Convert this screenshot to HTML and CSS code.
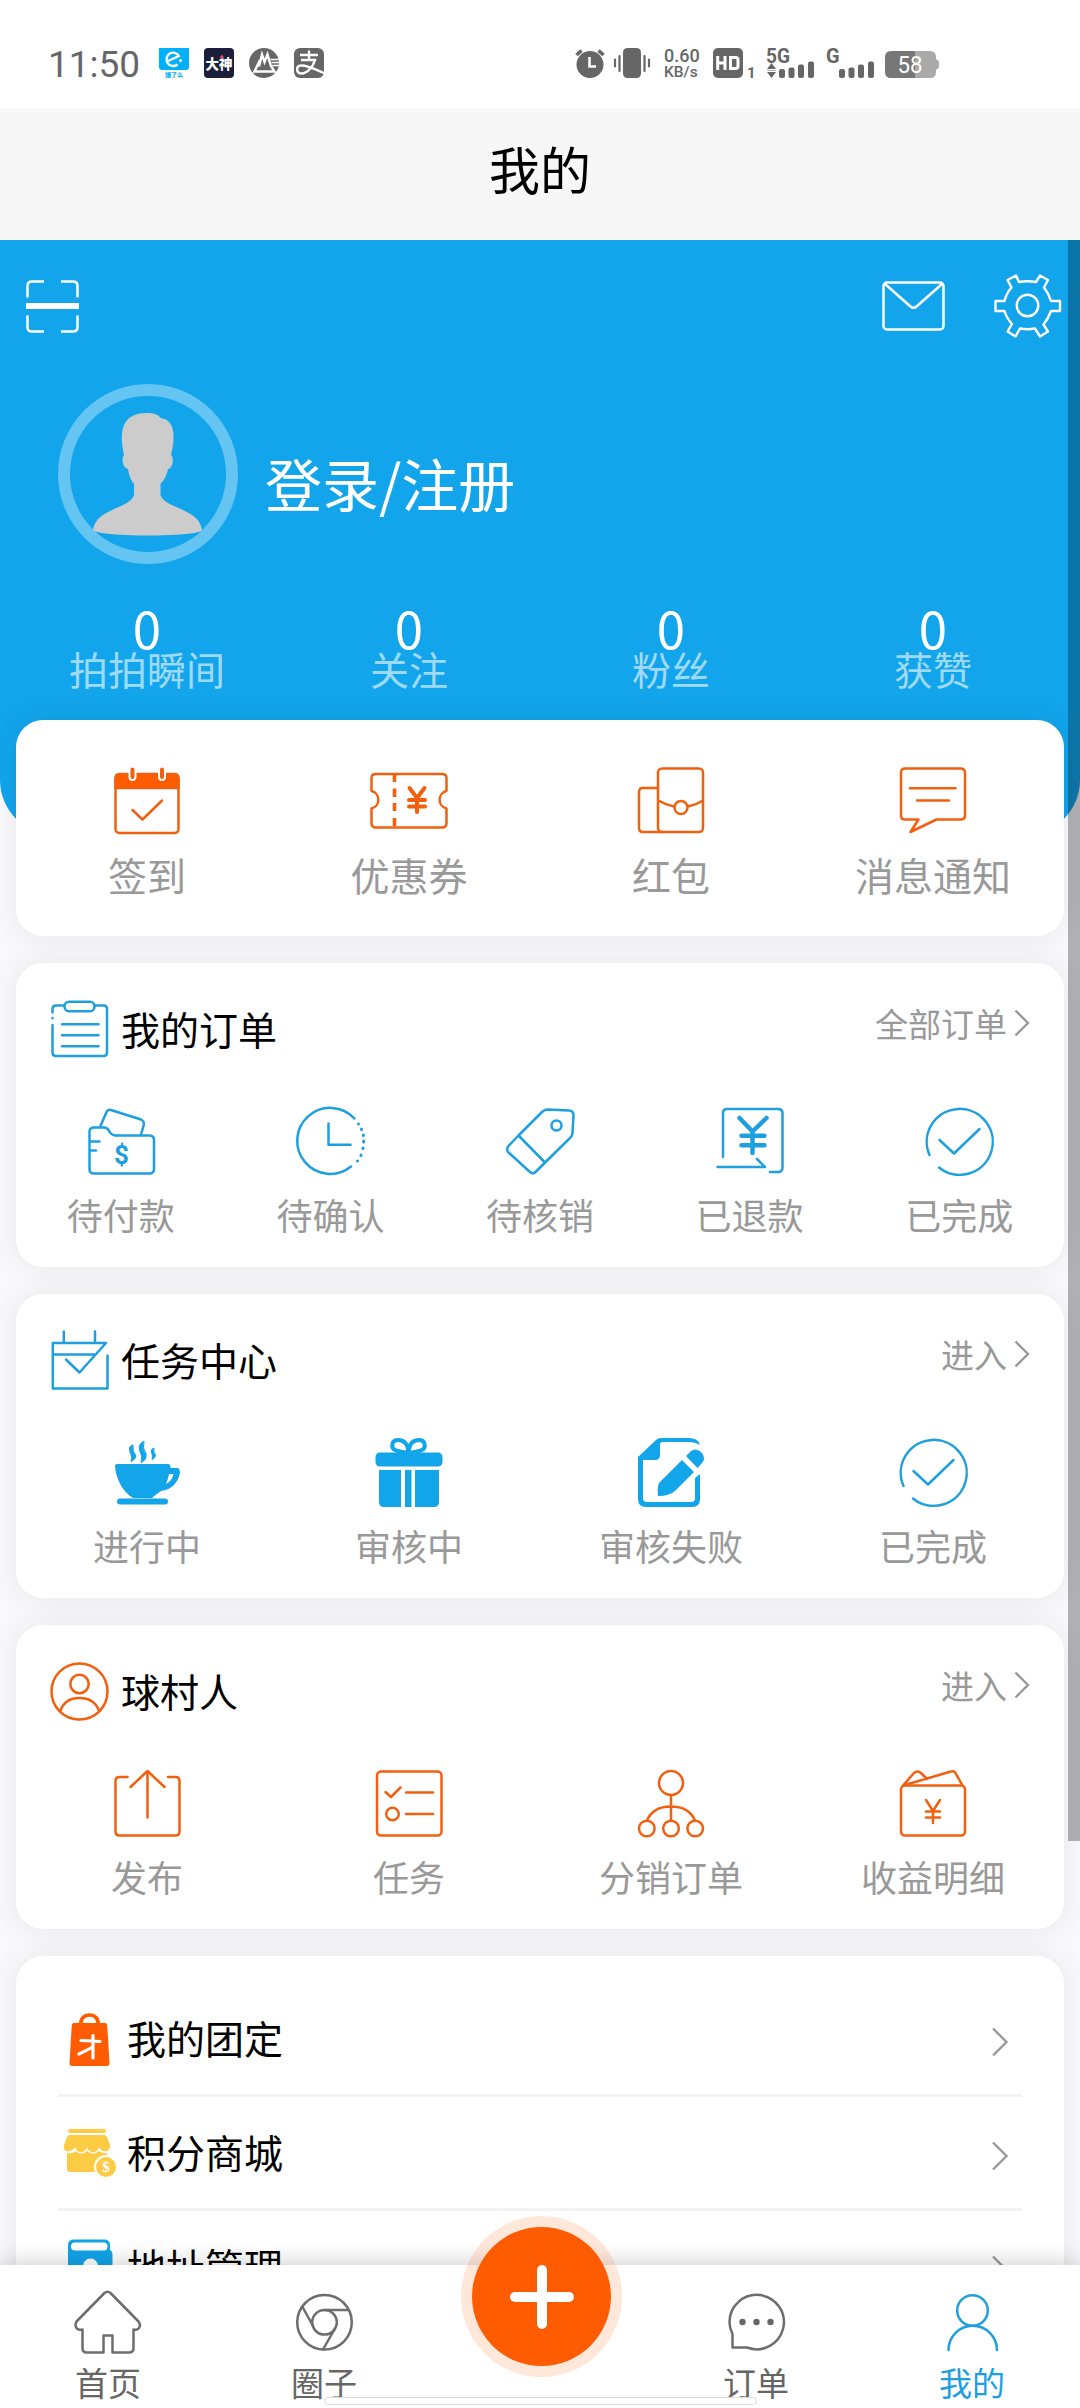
FILE: index.html
```html
<!DOCTYPE html>
<html lang="zh-CN">
<head>
<meta charset="utf-8">
<title>我的</title>
<link rel="stylesheet" href="styles.css">
</head>
<body>
<div class="phone">

  <div class="status">
    <span class="status-time">11:50</span>
    <div class="status-apps">
      <svg width="30" height="30" viewBox="0 0 30 30"><path d="M0 0H30V19Q30 22 27 22H3Q0 22 0 19Z" fill="#00b0fb"/><path d="M9 13L20 8A6.700 6.700 0 1 0 18.500 16.500" fill="none" stroke="#fff" stroke-width="2.400"/><circle cx="21.500" cy="12.500" r="1.500" fill="#fff"/><text x="15" y="28.500" text-anchor="middle" class="app-tiny">饿了么</text></svg>
      <svg width="30" height="30" viewBox="0 0 30 30"><rect width="30" height="30" rx="4" fill="#1b1f3c"/><text x="15" y="20.500" text-anchor="middle" class="app-dark">大神</text><path d="M17.800 7v4M16 9h3.600" stroke="#e5455b" stroke-width="1.400"/></svg>
      <svg width="30" height="30" viewBox="0 0 30 30"><circle cx="15" cy="15" r="15" fill="#666"/><path d="M10 18.500L13 6.500L15.500 14L18.500 6.500L22 18.500M11 12L5.500 23.500H25.500L21.500 17" fill="none" stroke="#fff" stroke-width="2.400"/><path d="M21.500 11.500h8M22.500 14.500h8M23.500 17.500h7" stroke="#fff" stroke-width="1.300"/></svg>
      <svg width="30" height="30" viewBox="0 0 30 30"><rect width="30" height="30" rx="6" fill="#666"/><path d="M6 7H24M15 2.500V12M7 12H21C19 19 13 25.500 7.500 25.500C2 25.500 1.500 18 7 17.500C14 17 22 22 30 25" fill="none" stroke="#fff" stroke-width="2.400"/></svg>
    </div>
    <div class="status-right">
      <svg width="30" height="30" viewBox="0 0 30 30"><circle cx="15" cy="16.500" r="13.500" fill="#666"/><path d="M1.500 7L6.500 2.500M28.500 7L23.500 2.500" stroke="#666" stroke-width="3.600"/><path d="M14.500 9V18.500H21" fill="none" stroke="#fff" stroke-width="2.600"/></svg>
      <svg class="vibrate" width="38" height="30" viewBox="0 0 38 30"><rect x="10" width="18" height="30" rx="4.500" fill="#666"/><path d="M2 11.500v7M6.500 8v15M31.500 8v15M36 11.500v7" stroke="#666" stroke-width="2.200" stroke-linecap="round"/></svg>
      <div class="speed"><span class="speed-num">0.60</span><span class="speed-unit">KB/s</span></div>
      <svg class="hd" width="41" height="30" viewBox="0 0 41 30"><rect width="30" height="30" rx="5" fill="#666"/><path d="M4.700 8v14M12 8v14M4.700 15H12M17.500 9.500H22.500Q25 9.500 25 12V18Q25 20.500 22.500 20.500H17.500Z" fill="none" stroke="#fff" stroke-width="3"/><text x="34" y="29.500" class="status-one">1</text></svg>
      <svg class="sig" width="49" height="30" viewBox="0 0 49 30"><text x="0" y="14.500" class="status-net" textLength="24" lengthAdjust="spacingAndGlyphs">5G</text><path d="M1 21L5.500 15L10 21ZM1 24H10L5.500 30Z" fill="#666"/><path d="M1 22.500H10" stroke="#aaa"/><g fill="#666"><rect x="13" y="21" width="6" height="9" rx="2"/><rect x="22.500" y="19.500" width="6" height="10.500" rx="2"/><rect x="32" y="16.500" width="6" height="13.500" rx="2"/><rect x="42" y="13.500" width="6" height="16.500" rx="2"/></g></svg>
      <svg class="sig" width="49" height="30" viewBox="0 0 49 30"><text x="0" y="14.500" class="status-net">G</text><g fill="#666"><rect x="13" y="21" width="6" height="9" rx="2"/><rect x="22.500" y="19.500" width="6" height="10.500" rx="2"/><rect x="32" y="16.500" width="6" height="13.500" rx="2"/><rect x="42" y="13.500" width="6" height="16.500" rx="2"/></g></svg>
      <svg class="battery" width="54" height="30" viewBox="0 0 54 30"><path d="M30 3H45Q51 3 51 9V11L54 13.500V19.500L51 22V24Q51 30 45 30H30Z" fill="#aaa"/><path d="M6 3H30V30H6Q0 30 0 24V9Q0 3 6 3Z" fill="#777"/><text x="25" y="25" text-anchor="middle" class="status-batt" textLength="25" lengthAdjust="spacingAndGlyphs">58</text></svg>
    </div>
  </div>

  <header class="navbar">我的</header>

  <main class="content">
    <section class="profile">
      <div class="tools">
        <svg width="53" height="53" viewBox="0 0 53 53" fill="none" stroke="#fff" stroke-width="2.500"><path d="M1.500 17.500V6Q1.500 1.500 6 1.500H18M35 1.500H47Q51.500 1.500 51.500 6V17.500M51.500 35.500V47Q51.500 51.500 47 51.500H35M18 51.500H6Q1.500 51.500 1.500 47V35.500"/><path d="M0 26H53" stroke-width="6"/></svg>
        <div class="tools-right">
          <svg width="63" height="50" viewBox="0 0 63 50" fill="none" stroke="#fff" stroke-width="2.500"><rect x="1.500" y="1.500" width="60" height="47" rx="3.500"/><path d="M3 3L28.500 25.500Q31.500 28 34.500 25.500L60 3"/></svg>
          <svg width="67" height="64" viewBox="0 0 67 64" fill="none" stroke="#fff" stroke-width="2.400" stroke-linejoin="round"><circle cx="33.500" cy="31.500" r="10.800"/><path d="M25 8Q33.500 6.500 42 8L46 1.500L54 6L50 13.500Q54.500 19 57 27H66V37H57Q54.500 44 49.500 50.500L54 57.500L46 62.500L41 54.500Q33.500 56 26 54.500L21.500 62.500L13.500 57.500L18 50Q12.500 44 10.500 37H1.500V27H10.500Q12.500 19 17.500 13.500L13.500 6L22 1.500Z"/></svg>
        </div>
      </div>
      <div class="user">
        <div class="avatar">
          <svg width="110" height="124" viewBox="0 0 110 124"><path d="M53 0C60 0 65 1 67.500 5C77 6 81 14 80.500 25C80.500 32 79 37 78 42C82 46 79 56 75 56C73.500 64 70 68 67.500 71V82C72 96 106 95 109 117C108 119 100 122 55 122.500C10 122 2 119 0 117C3 95 37 96 41 82V71C38 68 36 62 35 56C30 55 28 46 31 42C28 28 28 20 31 12C35 3 44 0 53 0Z" fill="#ccc"/></svg>
        </div>
        <span class="login">登录/注册</span>
      </div>
      <div class="stats">
        <div class="stat"><b>0</b><span>拍拍瞬间</span></div>
        <div class="stat"><b>0</b><span>关注</span></div>
        <div class="stat"><b>0</b><span>粉丝</span></div>
        <div class="stat"><b>0</b><span>获赞</span></div>
      </div>
    </section>

    <section class="card quick">
      <div class="grid four">
        <div class="cell"><svg width="70" height="70" viewBox="0 0 70 70" class="line orange"><rect x="3.500" y="9" width="63" height="58" rx="4"/><path d="M3.500 22V12Q3.500 8 8 8H62Q66.500 8 66.500 12V22Z" fill="#ff5b00"/><path d="M20.500 2V11M50 2V11" stroke="#fff" stroke-width="8"/><path d="M20.500 3.500V11M50 3.500V11" stroke-width="4"/><path d="M20.500 44L30.500 53.500L50 34.500"/></svg><span>签到</span></div>
        <div class="cell"><svg width="80" height="70" viewBox="0 0 80 70" class="line orange"><path d="M7 8H73Q77.500 8 77.500 12V25A9 9 0 0 0 77.500 42.500V57Q77.500 61.500 73 61.500H7Q2.500 61.500 2.500 57V42.500A9 9 0 0 0 2.500 25V12Q2.500 8 7 8Z"/><path d="M25.500 9V16M25.500 22.500V31M25.500 37V45M25.500 52V60" stroke-width="3.600" stroke-linecap="butt"/><path d="M40.500 22L48 32L55.500 22M48 32V46M40 34H56M40 40.500H56" stroke-width="4"/></svg><span>优惠券</span></div>
        <div class="cell"><svg width="70" height="70" viewBox="0 0 70 70" class="line orange"><path d="M21.500 22H7Q3 22 3 26V62Q3 66 7 66H27"/><rect x="22" y="2.500" width="45" height="63.500" rx="4"/><path d="M22.500 34.500Q30 39 38 40.500M52 40.500Q60 39 67 34.500"/><circle cx="45" cy="41.500" r="6.500"/></svg><span>红包</span></div>
        <div class="cell"><svg width="70" height="70" viewBox="0 0 70 70" class="line orange"><path d="M7 2.500H62.500Q67 2.500 67 7V49.500Q67 53.500 62.500 53.500H38.500L12.500 66L20.500 53.500H7Q3 53.500 3 49.500V7Q3 2.500 7 2.500Z"/><path d="M12 22.300H57.500M19 34.500H51"/></svg><span>消息通知</span></div>
      </div>
    </section>

    <section class="card">
      <div class="card-head">
        <svg width="60" height="60" viewBox="0 0 60 60" class="line blue head-icon"><path d="M2.500 13.500V10Q2.500 6.500 6 6.500H14.500M44.500 6.500H53.500Q57 6.500 57 10V53.500Q57 57 53.500 57H6Q2.500 57 2.500 53.500V26M2.500 19V19.200"/><rect x="14.500" y="2.800" width="30" height="9.500" rx="4.500"/><path d="M12 25.200H48.500M12 36.200H48.500M12 47.200H48.500"/></svg>
        <h2>我的订单</h2>
        <a class="more">全部订单<svg width="16" height="28" viewBox="0 0 16 28" class="chev"><path d="M1.500 1.500L14 14L1.500 26.500"/></svg></a>
      </div>
      <div class="grid five small">
        <div class="cell"><svg width="70" height="70" viewBox="0 0 70 70" class="line blue"><path d="M3.500 26Q3.500 21.500 8 21.500H18Q21 21.500 22.500 24Q25 29 29 29.500H63Q68 29.500 68 34V63Q68 67.500 63 67.500H8Q3.500 67.500 3.500 63ZM14.500 20L20.500 6Q22 3 25 4L55 13.500Q59 15.500 57.500 20L55 28.500M3.500 35.500H13.500M3.500 44.500H10"/><text x="35.500" y="58" text-anchor="middle" class="dollar">$</text></svg><span>待付款</span></div>
        <div class="cell"><svg width="70" height="70" viewBox="0 0 70 70" class="line blue"><path d="M59.500 12.500A33 33 0 1 0 56 60.500"/><path d="M63.500 18V18.100M66.500 23V23.500M68.300 29V29.500M68.700 35V36M68 42V42.500M66 49V49.500M62.500 55V55.100" stroke-width="3"/><path d="M33.500 17.500V38.700H55.500"/></svg><span>待确认</span></div>
        <div class="cell"><svg width="70" height="70" viewBox="0 0 70 70" class="line blue"><path d="M13.500 29.500L37 6Q39.500 3.500 42.500 3.500L64 4.500Q68.500 5 68.500 9L67.500 27Q67.500 30 65 32L30.500 66Q28 68.500 25 66L3 46Q1 43 3.500 40L13.500 29.500L39.500 56"/><circle cx="51.500" cy="19.500" r="5"/></svg><span>待核销</span></div>
        <div class="cell"><svg width="70" height="70" viewBox="0 0 70 70" class="line blue"><path d="M8 51V7Q8 3 12 3H63Q67.500 3 67.500 7V61.500Q67.500 66 63 66H55M2.500 61H50L42 53"/><path d="M24.500 12L37.500 25.500L51.500 12M37.500 25V47M26.500 29.700H49.500M26.500 39.200H49.500" stroke-width="4.500"/></svg><span>已退款</span></div>
        <div class="cell"><svg width="70" height="70" viewBox="0 0 70 70" class="line blue"><path d="M5.500 49A33 33 0 1 1 15 61.500"/><path d="M15.500 34L30 47.500L55.500 23"/></svg><span>已完成</span></div>
      </div>
    </section>

    <section class="card">
      <div class="card-head">
        <svg width="60" height="60" viewBox="0 0 60 60" class="line blue head-icon"><path d="M13.800 1.500V12M45 1.500V12M57.500 25.500V58.500H2.800V13H56L29.500 42.500L16 29.500M3 24.500H45.500"/></svg>
        <h2>任务中心</h2>
        <a class="more">进入<svg width="16" height="28" viewBox="0 0 16 28" class="chev"><path d="M1.500 1.500L14 14L1.500 26.500"/></svg></a>
      </div>
      <div class="grid four small">
        <div class="cell"><svg width="70" height="70" viewBox="0 0 70 70" fill="#12a5ea"><path fill-rule="evenodd" d="M5 27H56Q58.500 27 58.500 31H65Q68 31 68 36C66 46 59 53 49 54Q43 58 40 61H21C10 54 4 42 3 29Q3 27 5 27ZM57 37Q56 42 54 47Q60 44 61.500 37Z"/><rect x="5" y="61.500" width="51" height="6" rx="3"/><path d="M21 8Q16 9 18 15Q21 20 19 24.500Q24 22 24 19Q20 14 21 8ZM32 4Q26 7 27.500 13Q31 20 29 25.500Q35 23 34 17Q30 11 32 4ZM42 11Q38 12 40 17Q41 20 40 22.500Q43.500 21 43.500 18Q41 15 42 11Z" stroke="#12a5ea"/></svg><span>进行中</span></div>
        <div class="cell"><svg width="70" height="70" viewBox="0 0 70 70" fill="#12a5ea"><rect x="1.500" y="15.500" width="67" height="14" rx="4.500"/><path d="M5 33H27V70H10Q5 70 5 65ZM31 33H37.500V70H31ZM41 33H65V65Q65 70 60 70H41Z"/><path d="M34.500 16C34 5 29 3 24 3C17 3 17 11 21 13C25 15 30 15 34.500 16C39 15 44 15 48 13C52 11 52 3 45 3C40 3 35 5 34.500 16Z" fill="none" stroke="#12a5ea" stroke-width="4"/></svg><span>审核中</span></div>
        <div class="cell"><svg width="70" height="70" viewBox="0 0 70 70" fill="#12a5ea"><path d="M2 20L20 3Q22 1 25 1H53Q62 1 64 8Q59 5 53 5H27Q24 5 24 8V18Q24 23 19 23H7V61Q7 65 11 65H55Q59 65 59 61V41L64 37V62Q64 70 56 70H10Q2 70 2 62Z"/><path d="M46 23L58 35L40 53Q34 59 22 59Q21 51 23 46ZM50 19L55 14Q60 10 66 16Q70 22 66 26L61.500 31Z"/></svg><span>审核失败</span></div>
        <div class="cell"><svg width="70" height="70" viewBox="0 0 70 70" class="line blue"><path d="M5.500 49A33 33 0 1 1 15 61.500"/><path d="M15.500 34L30 47.500L55.500 23"/></svg><span>已完成</span></div>
      </div>
    </section>

    <section class="card">
      <div class="card-head">
        <svg width="60" height="60" viewBox="0 0 60 60" class="line orange head-icon"><circle cx="29.500" cy="30.500" r="28"/><circle cx="29.500" cy="23" r="9.200"/><path d="M10.500 49.500Q15 37 29.500 37T49 49.500"/></svg>
        <h2>球村人</h2>
        <a class="more">进入<svg width="16" height="28" viewBox="0 0 16 28" class="chev"><path d="M1.500 1.500L14 14L1.500 26.500"/></svg></a>
      </div>
      <div class="grid four small">
        <div class="cell"><svg width="70" height="70" viewBox="0 0 70 70" class="line orange"><path d="M15.500 9H7.500Q3.500 9 3.500 13V63.500Q3.500 67.500 7.500 67.500H63.500Q67.500 67.500 67.500 63.500V13Q67.500 9 63.500 9H56M35.500 4V49.500M18.500 19L35.500 3L52.500 19"/></svg><span>发布</span></div>
        <div class="cell"><svg width="70" height="70" viewBox="0 0 70 70" class="line orange"><rect x="3" y="3.500" width="64.500" height="64" rx="4"/><path d="M11.500 24L17 29L26.500 19.500M32 24.500H59M32 46H59"/><circle cx="18.500" cy="46" r="6.300"/></svg><span>任务</span></div>
        <div class="cell"><svg width="70" height="70" viewBox="0 0 70 70" class="line orange"><circle cx="35" cy="15" r="12"/><circle cx="10.800" cy="60.500" r="7.800"/><circle cx="35" cy="60.500" r="7.800"/><circle cx="59.200" cy="60.500" r="7.800"/><path d="M35 27V52.500M11 52.500Q17 38.500 35 38.500T59 52.500"/></svg><span>分销订单</span></div>
        <div class="cell"><svg width="70" height="70" viewBox="0 0 70 70" class="line orange"><rect x="3" y="17.500" width="64" height="50" rx="4"/><path d="M5 17.500L16 5Q19.500 2 23 5L29 11M5 17.500L53 3.500Q56 2.500 57.500 5L64.500 17.500"/><path d="M28 32L35 43L42 32M35 43V55M28 43.500H42M28 49.500H42"/></svg><span>收益明细</span></div>
      </div>
    </section>

    <section class="card menu">
      <div class="row">
        <span class="row-icon"><svg width="43" height="56" viewBox="0 0 43 56"><path d="M12.500 14Q13 4 21.500 4T30.500 14" fill="none" stroke="#ff5b00" stroke-width="3.600"/><path d="M6 12H37Q39 12 39.200 14L41.500 52Q41.500 55 39 55H4Q1.500 55 1.500 52L3.800 14Q4 12 6 12Z" fill="#ff5b00"/><path d="M13 29.500L32 30.500M25 24.500V47M24.500 36Q18 40 11 43" fill="none" stroke="#fff" stroke-width="3.200" stroke-linecap="round"/></svg></span>
        <span class="row-name">我的团定</span>
        <svg width="18" height="30" viewBox="0 0 18 30" class="chev"><path d="M2 1.500L15.500 15L2 28.500"/></svg>
      </div>
      <div class="row">
        <span class="row-icon"><svg width="55" height="52" viewBox="0 0 55 52"><g fill="#fecb45"><rect x="6" y="2" width="38" height="4" rx="2"/><path d="M8 8H42Q44 8 45 10L48 18C49 25 40 27 37 20C35 27 27 27 25 20C23 27 15 27 13 20C9 27 0 25 2 18L5 10Q6 8 8 8Z"/><path d="M5 26Q10 27 13.500 24Q19 29 25 24Q31 29 37 24Q41 27 45 26V40L35 45H8Q5 45 5 42Z"/><circle cx="44" cy="40" r="12" fill="#fff"/><circle cx="44" cy="40" r="10"/></g><text x="44" y="45" text-anchor="middle" class="coin">$</text></svg></span>
        <span class="row-name">积分商城</span>
        <svg width="18" height="30" viewBox="0 0 18 30" class="chev"><path d="M2 1.500L15.500 15L2 28.500"/></svg>
      </div>
      <div class="row">
        <span class="row-icon"><svg width="46" height="56" viewBox="0 0 46 56"><path d="M7 .5H37Q43 .5 43 6V11Q45.500 12 45.500 16V50Q45.500 55 40 55H6Q1 55 1 50V6Q1 .5 7 .5Z" fill="#12a5ea"/><rect x="4" y="3.500" width="36.500" height="8" rx="4" fill="#fff"/><circle cx="23.500" cy="27" r="7.500" fill="#fff"/></svg></span>
        <span class="row-name">地址管理</span>
        <svg width="18" height="30" viewBox="0 0 18 30" class="chev"><path d="M2 1.500L15.500 15L2 28.500"/></svg>
      </div>
    </section>
    <i class="scrollbar"></i>
  </main>

  <nav class="tabbar">
    <a class="tab"><svg width="70" height="66" viewBox="0 0 70 66" class="line gray"><path d="M31.500 4Q34.500 1.500 37.500 4L65.500 32.500Q68 36 66 39Q64 41.500 60.500 40.500V59Q60.500 63.500 56 63.500H39.500V46.500H30.500V63.500H13.500Q9.500 63.500 9.500 59V40.500Q5 41.500 3.500 39Q1.500 36 3.500 32.500Z"/></svg><span>首页</span></a>
    <a class="tab"><svg width="70" height="66" viewBox="0 0 70 66" class="line gray"><circle cx="35.500" cy="33.300" r="27.300"/><circle cx="35.500" cy="33.300" r="12.300"/><path d="M35.500 21H59M23.500 36L13.500 18M46 39.500L34 60.500"/></svg><span>圈子</span></a>
    <a class="tab"></a>
    <a class="tab"><svg width="70" height="66" viewBox="0 0 70 66" class="line gray"><path d="M11.500 45Q8.500 39 8.500 33.300A27.200 27.200 0 1 1 26 58.500H11.500Z"/><g fill="#666" stroke="none"><circle cx="21.500" cy="33" r="3.200"/><circle cx="35.500" cy="33" r="3.200"/><circle cx="49.500" cy="33" r="3.200"/></g></svg><span>订单</span></a>
    <a class="tab active"><svg width="70" height="66" viewBox="0 0 70 66" class="line blue"><circle cx="35.500" cy="21.500" r="15.300"/><path d="M11.500 61A24.200 24.200 0 0 1 60 61"/></svg><span>我的</span></a>
    <span class="add"><svg width="64" height="64" viewBox="0 0 64 64"><path d="M32 5V59M5 32H59" stroke="#fff" stroke-width="10" stroke-linecap="round"/></svg></span>
    <i class="home-bar"></i>
  </nav>
</div>
</body>
</html>
```
FILE: styles.css
```css
* { box-sizing: border-box; }
body {
  margin: 0;
  font-family: "Noto Sans CJK SC", sans-serif;
  font-weight: 400;
  color: #000;
}
svg { display: block; flex: none; overflow: visible; }
.phone {
  display: flex;
  flex-direction: column;
  width: 1080px;
  height: 2408px;
  overflow: hidden;
  background: #f9f9fc;
}

/* system status bar */
.status {
  display: flex;
  align-items: center;
  flex: none;
  height: 108px;
  padding: 18px 141px 0 48px;
  background: #fff;
  font-family: Roboto, sans-serif;
  color: #666;
}
.status-time { width: 111px; font-size: 37px; font-weight: 400; line-height: 40px; padding-top: 3px; }
.status-apps { display: flex; gap: 15px; }
.app-tiny { font: 900 6px "Noto Sans CJK SC", sans-serif; fill: #00b0fb; }
.app-dark { font: 900 13.5px "Noto Sans CJK SC", sans-serif; fill: #fff; }
.status-right { display: flex; align-items: center; margin-left: auto; }
.vibrate { margin-left: 8px; }
.speed { display: flex; flex-direction: column; width: 36px; margin: 0 13px; font-weight: 500; }
.speed-num { font-size: 18px; line-height: 17px; }
.speed-unit { font-size: 15.5px; line-height: 16px; }
.status-one { font: 700 15px Roboto, sans-serif; fill: #666; }
.status-net { font: 700 20px Roboto, sans-serif; fill: #666; }
.status-batt { font: 400 24px Roboto, sans-serif; fill: #fff; }
.hd { margin-right: 12px; }
.sig { margin-right: 11px; }
.battery { margin-left: -1px; }

.navbar {
  flex: none;
  height: 132px;
  background: #f7f7f7;
  font-size: 51px;
  line-height: 121px;
  text-align: center;
}

.content { position: relative; flex: 1; min-height: 0; overflow: hidden; }
.scrollbar {
  position: absolute;
  top: 0;
  right: 0;
  width: 12px;
  height: 1601px;
  background: rgba(0, 0, 0, .29);
}

/* profile header */
.profile {
  height: 595px;
  padding-top: 34px;
  border-radius: 0 0 55px 55px;
  background: #12a5ec;
  color: #fff;
}
.tools { display: flex; align-items: center; justify-content: space-between; height: 64px; padding: 0 19px 0 26px; }
.tools-right { display: flex; align-items: center; gap: 49px; }
.user { display: flex; align-items: center; gap: 27px; margin-top: 46px; padding-left: 58px; }
.avatar {
  display: flex;
  justify-content: center;
  width: 180px;
  height: 180px;
  padding-top: 17px;
  border: 12px solid rgba(255, 255, 255, .35);
  border-radius: 50%;
}
.login { padding-top: 15px; font-size: 57px; line-height: 70px; }
.stats { display: grid; grid-template-columns: repeat(4, 1fr); margin: 38px 16px 0; }
.stat { display: flex; flex-direction: column; align-items: center; }
.stat b { font-size: 51px; font-weight: 400; line-height: 50px; }
.stat span { font-size: 39px; line-height: 32px; color: rgba(255, 255, 255, .6); }

/* cards */
.card {
  height: 304px;
  margin: 0 16px 27px;
  border-radius: 27px;
  background: #fff;
  box-shadow: 0 0 30px rgba(0, 0, 0, .08);
}
.quick { position: relative; height: 216px; margin-top: -115px; padding-top: 46px; }
.card-head { display: flex; align-items: center; height: 96px; padding: 36px 34px 0; }
.card-head h2 { margin: 0 0 3px 11px; font-size: 39px; font-weight: 400; line-height: 56px; }
.more {
  display: flex;
  align-items: center;
  align-self: flex-start;
  gap: 7px;
  height: 47px;
  margin-left: auto;
  font-size: 33px;
  color: #999;
}
.chev { fill: none; stroke: #999; stroke-width: 2.4; }
.grid { display: grid; }
.four { grid-template-columns: repeat(4, 1fr); }
.five { grid-template-columns: repeat(5, 1fr); }
.cell { display: flex; flex-direction: column; align-items: center; gap: 16px; font-size: 39px; line-height: 44px; color: #999; }
.small { margin-top: 47px; }
.small .cell { font-size: 36px; line-height: 44px; }

.line { fill: none; stroke-width: 2.5; stroke-linecap: round; stroke-linejoin: round; }
.orange { stroke: #f2600f; }
.blue { stroke: #1e9fdf; }
.gray { stroke: #6d6d6d; }
.dollar { font: 700 26px "Roboto", sans-serif; fill: #1e9fdf; stroke: none; }
.coin { font: 700 15px "Liberation Serif", serif; fill: #fff; }

/* menu list */
.menu { height: 420px; margin-bottom: 0; padding: 27px 42px 0; }
.row { display: flex; align-items: center; height: 114px; padding-right: 13px; border-bottom: 3px solid #f3f3f5; }
.row-icon { display: flex; justify-content: center; width: 63px; margin-right: 6px; }
.row-name { flex: 1; margin-bottom: 3px; font-size: 39px; line-height: 56px; }
.row .chev { margin-top: 6px; }

/* bottom tabs */
.tabbar {
  position: relative;
  display: grid;
  grid-template-columns: repeat(5, 1fr);
  flex: none;
  height: 143px;
  background: #fff;
  box-shadow: 0 0 24px rgba(0, 0, 0, .22);
}
.tab { display: flex; flex-direction: column; align-items: center; gap: 7px; padding-top: 24px; font-size: 33px; line-height: 40px; color: #666; }
.active { color: #1e9fdf; }
.add {
  position: absolute;
  left: 461px;
  top: -49px;
  display: flex;
  align-items: center;
  justify-content: center;
  width: 161px;
  height: 161px;
  border: 11px solid rgba(255, 91, 0, .15);
  border-radius: 50%;
  background: #ff5b00;
  background-clip: padding-box;
}
.home-bar {
  position: absolute;
  left: 324px;
  bottom: 3px;
  width: 433px;
  height: 8px;
  border: 1px solid #ddd;
  border-radius: 4px;
  background: #fff;
}
```
